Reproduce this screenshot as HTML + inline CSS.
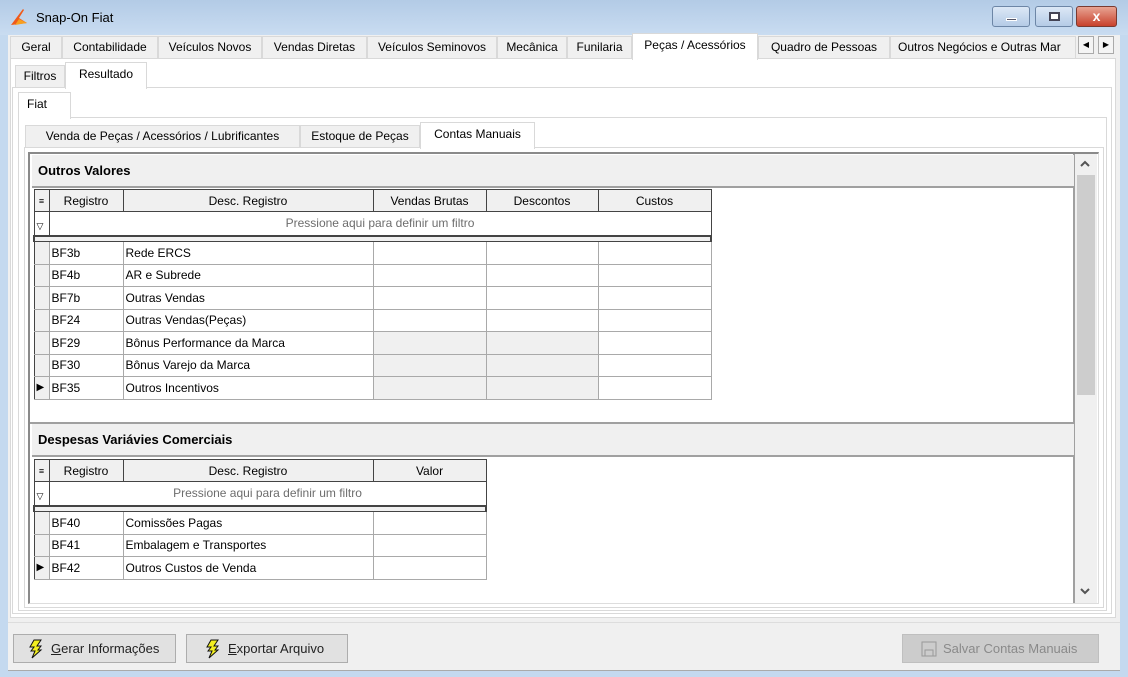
<!DOCTYPE html>
<html><head><meta charset="utf-8"><style>
*{box-sizing:border-box;margin:0;padding:0}
body{width:1128px;height:677px;overflow:hidden;background:#c4d9ef;font-family:"Liberation Sans",Tahoma,sans-serif;font-size:12px;color:#000;position:relative}
.a{position:absolute}
.title{left:0;top:0;width:1128px;height:35px;background:linear-gradient(#b3cbe6,#c9dcf1)}
.tab{position:absolute;height:23px;border:1px solid #d9d9d9;border-bottom:none;background:#f0f0f0;text-align:center;line-height:21px;white-space:nowrap;overflow:hidden}
.tab.sel{background:#fff;border-color:#d9d9d9}
.panel{position:absolute;background:#fff;border:1px solid #d9d9d9}
table{border-collapse:collapse;table-layout:fixed;position:absolute}
td{padding:0 2px;white-space:nowrap;overflow:hidden}
.h td{border:1px solid #444;background:#f0f0f0;text-align:center;height:22px}
.f td{height:24px;color:#6d6d6d;text-align:center;border-left:1px solid #444;border-right:1px solid #444}
.bar td{height:6px;border:2px solid #444;border-bottom-width:1px;background:#f0f0f0;padding:0}
.r td{border:1px solid #a9a9a9;height:22.5px}
.r td.i{background:#f0f0f0;border-color:#444 #a9a9a9 #a9a9a9 #444;padding:0}
.g{background:#f0f0f0}
.btn{position:absolute;height:29px;border:1px solid #adadad;background:#e1e1e1;line-height:27px;font-size:13px;color:#222}
.ghead{position:absolute;left:32px;width:1042px;height:33px;background:#f0f0f0;border-bottom:2px solid #a0a0a0;font-weight:bold;font-size:13px;padding:8px 0 0 6px}
</style></head><body>
<div class="a title"></div>
<svg class="a" style="left:9px;top:8px" width="20" height="18" viewBox="0 0 20 18"><path d="M2 17 L8 9 L14 1 L15 2 L10 10 L18 15 Z" fill="#f05a1a"/><path d="M6 17 L10 11 L18 15 Z" fill="#f7a020"/></svg>
<div class="a" style="left:36px;top:10px;font-size:13px">Snap-On Fiat</div>
<div class="a" style="left:992px;top:6px;width:38px;height:21px;border:1px solid #6d86a6;border-radius:3px;background:linear-gradient(#dce8f6,#b5cbe6)"><div class="a" style="left:13px;top:11px;width:11px;height:3px;background:#556;border:1px solid #fff"></div></div>
<div class="a" style="left:1035px;top:6px;width:38px;height:21px;border:1px solid #6d86a6;border-radius:3px;background:linear-gradient(#dce8f6,#b5cbe6)"><div class="a" style="left:13px;top:5px;width:11px;height:9px;border:2px solid #445;background:#fff"></div></div>
<div class="a" style="left:1076px;top:6px;width:41px;height:21px;border:1px solid #7a3a30;border-radius:3px;background:linear-gradient(#e8a493,#c8412c);color:#fff;font-weight:bold;text-align:center;line-height:19px;font-size:14px">x</div>
<div class="a" style="left:8px;top:35px;width:1112px;height:636px;background:#f0f0f0"></div>
<div class="tab" style="left:10px;top:36px;width:52px">Geral</div>
<div class="tab" style="left:62px;top:36px;width:96px">Contabilidade</div>
<div class="tab" style="left:158px;top:36px;width:104px">Veículos Novos</div>
<div class="tab" style="left:262px;top:36px;width:105px">Vendas Diretas</div>
<div class="tab" style="left:367px;top:36px;width:130px">Veículos Seminovos</div>
<div class="tab" style="left:497px;top:36px;width:70px">Mecânica</div>
<div class="tab" style="left:567px;top:36px;width:65px">Funilaria</div>
<div class="tab" style="left:758px;top:36px;width:132px">Quadro de Pessoas</div>
<div class="tab" style="left:890px;top:36px;width:186px;text-align:left;padding-left:7px">Outros Negócios e Outras Mar</div>
<div class="a" style="left:1078px;top:36px;width:16px;height:18px;border:1px solid #aaa;background:#f4f4f4;font-size:8px;text-align:center;line-height:16px">◀</div>
<div class="a" style="left:1098px;top:36px;width:16px;height:18px;border:1px solid #aaa;background:#f4f4f4;font-size:8px;text-align:center;line-height:16px">▶</div>
<div class="panel" style="left:10px;top:58px;width:1106px;height:560px"></div>
<div class="tab sel" style="left:632px;top:33px;width:126px;height:27px;line-height:22px">Peças / Acessórios</div>
<div class="tab" style="left:15px;top:65px;width:50px;height:23px">Filtros</div>
<div class="panel" style="left:12px;top:87px;width:1100px;height:527px"></div>
<div class="tab sel" style="left:65px;top:62px;width:82px;height:27px;line-height:22px">Resultado</div>
<div class="panel" style="left:18px;top:117px;width:1089px;height:494px"></div>
<div class="tab sel" style="left:18px;top:92px;width:53px;height:27px;text-align:left;padding-left:8px;line-height:22px">Fiat</div>
<div class="tab" style="left:25px;top:125px;width:275px;height:23px">Venda de Peças / Acessórios / Lubrificantes</div>
<div class="tab" style="left:300px;top:125px;width:120px;height:23px">Estoque de Peças</div>
<div class="panel" style="left:24px;top:147px;width:1080px;height:461px"></div>
<div class="tab sel" style="left:420px;top:122px;width:115px;height:27px;line-height:22px">Contas Manuais</div>
<div class="a" style="left:28px;top:152px;width:1071px;height:452px;border:2px solid #8a8a8a;border-right:1px solid #ddd;border-bottom:1px solid #ddd;background:#fff"></div>
<div class="a" style="left:1075px;top:154px;width:22px;height:449px;background:#f0f0f0"></div>
<div class="a" style="left:1077px;top:175px;width:18px;height:220px;background:#cdcdcd"></div>
<svg class="a" style="left:1080px;top:160px" width="10" height="8"><path d="M1 6 L5 2 L9 6" stroke="#555" stroke-width="2" fill="none"/></svg>
<svg class="a" style="left:1080px;top:587px" width="10" height="8"><path d="M1 2 L5 6 L9 2" stroke="#555" stroke-width="2" fill="none"/></svg>
<div class="a" style="left:1073px;top:154px;width:2px;height:449px;background:#a0a0a0"></div>

<div class="ghead" style="top:155px">Outros Valores</div>
<table style="left:33px;top:189px;width:678px">
<colgroup><col style="width:15px"><col style="width:74px"><col style="width:250px"><col style="width:113px"><col style="width:112px"><col style="width:113px"></colgroup>
<tr class="h"><td style="font-size:9px;padding:0">&#8801;</td><td>Registro</td><td>Desc. Registro</td><td>Vendas Brutas</td><td>Descontos</td><td>Custos</td></tr>
<tr class="f"><td style="text-align:left;padding:6px 0 0 2px;font-size:9px;color:#000">&#9661;</td><td colspan="5">Pressione aqui para definir um filtro</td></tr>
<tr class="bar"><td colspan="6"></td></tr>
<tr class="r"><td class="i"></td><td>BF3b</td><td>Rede ERCS</td><td></td><td></td><td></td></tr>
<tr class="r"><td class="i"></td><td>BF4b</td><td>AR e Subrede</td><td></td><td></td><td></td></tr>
<tr class="r"><td class="i"></td><td>BF7b</td><td>Outras Vendas</td><td></td><td></td><td></td></tr>
<tr class="r"><td class="i"></td><td>BF24</td><td>Outras Vendas(Peças)</td><td></td><td></td><td></td></tr>
<tr class="r"><td class="i"></td><td>BF29</td><td>Bônus Performance da Marca</td><td class="g"></td><td class="g"></td><td></td></tr>
<tr class="r"><td class="i"></td><td>BF30</td><td>Bônus Varejo da Marca</td><td class="g"></td><td class="g"></td><td></td></tr>
<tr class="r"><td class="i" style="font-size:10px;padding-left:2px">&#9654;</td><td>BF35</td><td>Outros Incentivos</td><td class="g"></td><td class="g"></td><td></td></tr>
</table>
<div class="a" style="left:30px;top:422px;width:1043px;height:2px;background:#a0a0a0"></div>
<div class="ghead" style="top:424px">Despesas Variávies Comerciais</div>
<table style="left:33px;top:459px;width:453px">
<colgroup><col style="width:15px"><col style="width:74px"><col style="width:250px"><col style="width:113px"></colgroup>
<tr class="h"><td style="font-size:9px;padding:0">&#8801;</td><td>Registro</td><td>Desc. Registro</td><td>Valor</td></tr>
<tr class="f"><td style="text-align:left;padding:6px 0 0 2px;font-size:9px;color:#000">&#9661;</td><td colspan="3">Pressione aqui para definir um filtro</td></tr>
<tr class="bar"><td colspan="4"></td></tr>
<tr class="r"><td class="i"></td><td>BF40</td><td>Comissões Pagas</td><td></td></tr>
<tr class="r"><td class="i"></td><td>BF41</td><td>Embalagem e Transportes</td><td></td></tr>
<tr class="r"><td class="i" style="font-size:10px;padding-left:2px">&#9654;</td><td>BF42</td><td>Outros Custos de Venda</td><td></td></tr>
</table>
<div class="a" style="left:8px;top:622px;width:1112px;height:49px;background:#f0f0f0;border-top:1px solid #ddd;border-bottom:1px solid #aaa"></div>
<div class="btn" style="left:13px;top:634px;width:163px"><svg style="position:absolute;left:14px;top:4px" width="16" height="20" viewBox="0 0 16 20"><path d="M6 1 L13 1 L9 7 L13 7 L10 11 L13 11 L4 19 L7 12 L3 12 L6 8 L2 8 Z" fill="#f2ee20" stroke="#111" stroke-width="1"/></svg><span style="position:absolute;left:37px"><u>G</u>erar Informações</span></div>
<div class="btn" style="left:186px;top:634px;width:162px"><svg style="position:absolute;left:18px;top:4px" width="16" height="20" viewBox="0 0 16 20"><path d="M6 1 L13 1 L9 7 L13 7 L10 11 L13 11 L4 19 L7 12 L3 12 L6 8 L2 8 Z" fill="#f2ee20" stroke="#111" stroke-width="1"/></svg><span style="position:absolute;left:41px"><u>E</u>xportar Arquivo</span></div>
<div class="btn" style="left:902px;top:634px;width:197px;background:#ccc;border-color:#bfbfbf;color:#8a8a8a"><svg style="position:absolute;left:18px;top:6px" width="16" height="16"><rect x="1" y="1" width="14" height="14" fill="none" stroke="#999"/><rect x="4" y="9" width="8" height="6" fill="none" stroke="#999"/></svg><span style="position:absolute;left:40px">Salvar Contas Manuais</span></div>
</body></html>
